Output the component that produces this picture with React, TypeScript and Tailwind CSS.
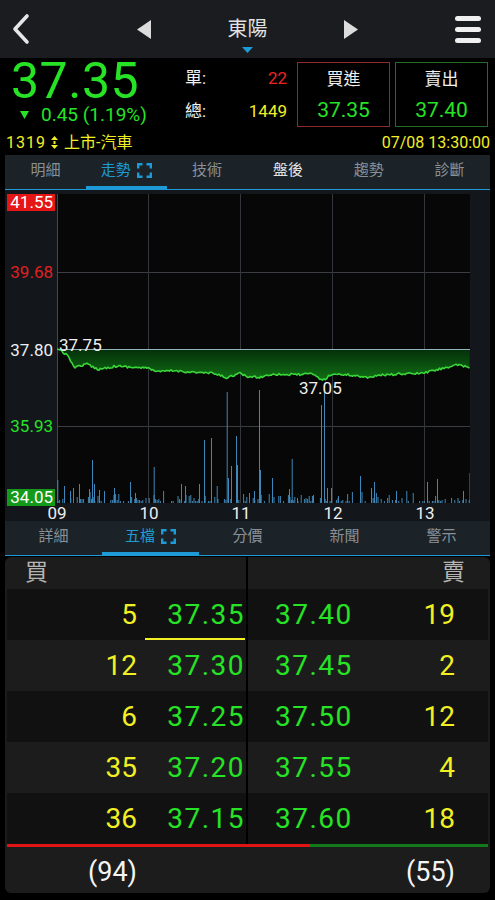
import React from "react";

const PW = 413;
const PH = 309;
const REF = 155;

const anchors: [number, number][] = [
  [57, 349], [60, 350], [66.7, 355], [75, 367.3], [86.7, 364], [98, 369.3], [116.7, 366], [133, 367.3],
  [150, 368.3], [156.7, 372], [173, 370.7], [200, 372.7], [213, 373.3], [226.7, 377.7], [240, 373.3],
  [246.7, 376.7], [260, 377.3], [273, 374], [290, 374.7], [313, 374], [322.7, 380.7], [331.7, 374],
  [350, 375], [366.7, 377.3], [383, 375], [400, 374], [423, 373.3], [433, 370.7], [446.7, 367.3],
  [456.7, 365], [470, 367.7],
].map(([x, y]) => [x - 57, y - 194] as [number, number]);

function rng(seed: number) {
  let s = seed;
  return () => {
    s = (s * 16807) % 2147483647;
    return (s - 1) / 2147483646;
  };
}

function interp(x: number) {
  for (let i = 0; i < anchors.length - 1; i++) {
    const [x0, y0] = anchors[i];
    const [x1, y1] = anchors[i + 1];
    if (x >= x0 && x <= x1) {
      const t = (x - x0) / (x1 - x0 || 1);
      return y0 + (y1 - y0) * t;
    }
  }
  return anchors[anchors.length - 1][1];
}

const r1 = rng(12345);
const linePts: [number, number][] = [];
for (let x = 0; x <= PW; x += 1.5) {
  let y = interp(x);
  if (x > 4) y += (r1() - 0.5) * 2.2;
  linePts.push([x, y]);
}
const linePath = linePts.map((p, i) => `${i === 0 ? "M" : "L"}${p[0].toFixed(1)} ${p[1].toFixed(1)}`).join(" ");
const fillPath = `M0 ${REF} ` + linePts.map((p) => `L${p[0].toFixed(1)} ${p[1].toFixed(1)}`).join(" ") + ` L${PW} ${REF} Z`;

const spikes: [number, number][] = [
  [57.3, 23], [64, 17], [70, 12], [73, 15], [79, 19], [89, 14], [92, 43], [94, 19], [99, 13], [104, 12],
  [114, 15], [130, 21], [135, 10], [153.7, 36], [181, 19], [185, 17], [199, 19], [204, 63], [211, 65],
  [216.7, 17], [226.7, 111], [228, 25], [231, 37], [236, 67], [237, 38], [249, 10], [254, 12], [259, 113],
  [260, 33], [272, 25], [289, 14], [291.7, 44], [297, 5], [313, 8], [321, 98], [324, 112], [327, 15],
  [331, 15], [338, 7], [360, 27], [371, 15], [374, 21], [396, 12], [427, 21], [437, 24], [463, 12], [469.5, 30],
];
const r2 = rng(777);
const bars: [number, number][] = [];
for (let x = 0.5; x < PW; x += 1.6) {
  if (r2() < 0.55) {
    const h = 2 + Math.floor(r2() * r2() * 12);
    bars.push([x, h]);
  }
}
spikes.forEach(([x, h]) => bars.push([x - 57, h]));

function Chevron() {
  return (
    <svg width="20" height="32" viewBox="0 0 20 32">
      <path d="M16 3 L4 16 L16 29" fill="none" stroke="#e6e6e6" strokeWidth="3.6" strokeLinecap="round" strokeLinejoin="round" />
    </svg>
  );
}

function Brackets() {
  return (
    <svg width="15" height="15" viewBox="0 0 15 15" className="ml-[6px]">
      <path d="M1.2 5.5 V1.2 H5.5 M9.5 1.2 H13.8 V5.5 M13.8 9.5 V13.8 H9.5 M5.5 13.8 H1.2 V9.5" fill="none" stroke="#1e9ad6" strokeWidth="2.4" />
    </svg>
  );
}

function Tabs({ items, active, bright }: { items: string[]; active: number; bright?: number }) {
  return (
    <div className="flex border-b border-[#1e9ad6] bg-[#1b2329]">
      {items.map((t, i) => (
        <div key={t} className="flex flex-1 flex-col">
          <div
            className={
              "flex h-[31px] items-center justify-center text-[15px] " +
              (i === active ? "text-[#1e9ad6]" : i === bright ? "text-[#e4e4e4]" : "text-[#8a9096]")
            }
          >
            <span>{t}</span>
            {i === active && <Brackets />}
          </div>
          <div className={"h-[3px] " + (i === active ? "bg-[#1e9ad6]" : "")} />
        </div>
      ))}
    </div>
  );
}

const book = [
  { bq: "5", bp: "37.35", ap: "37.40", aq: "19" },
  { bq: "12", bp: "37.30", ap: "37.45", aq: "2" },
  { bq: "6", bp: "37.25", ap: "37.50", aq: "12" },
  { bq: "35", bp: "37.20", ap: "37.55", aq: "4" },
  { bq: "36", bp: "37.15", ap: "37.60", aq: "18" },
];

export default function App() {
  return (
    <div className="h-[900px] w-[495px] overflow-hidden bg-black font-[Roboto,'Noto_Sans_CJK_TC',sans-serif] text-white">
      {/* header */}
      <div className="flex h-[58px] items-center bg-[#1a1c1f]">
        <div className="flex w-[137px] pl-[11px]">
          <Chevron />
        </div>
        <svg width="14" height="19" viewBox="0 0 14 19">
          <path d="M14 0 L0 9.5 L14 19 Z" fill="#dcdcdc" />
        </svg>
        <div className="flex h-full w-[193px] flex-col items-center pt-[16px]">
          <div className="text-[20px] leading-[26px] text-[#e2e2e2]">東陽</div>
          <svg width="11" height="6" viewBox="0 0 11 6" className="mt-[5px]">
            <path d="M0 0 L11 0 L5.5 6 Z" fill="#1e9ad6" />
          </svg>
        </div>
        <svg width="14" height="19" viewBox="0 0 14 19">
          <path d="M0 0 L14 9.5 L0 19 Z" fill="#dcdcdc" />
        </svg>
        <div className="flex flex-1 justify-end pr-[14px]">
          <div className="flex w-[26px] flex-col gap-[6px]">
            <div className="h-[5px] rounded-full bg-[#f0f0f0]" />
            <div className="h-[5px] rounded-full bg-[#f0f0f0]" />
            <div className="h-[5px] rounded-full bg-[#f0f0f0]" />
          </div>
        </div>
      </div>

      {/* quote */}
      <div className="flex h-[97px] flex-col">
        <div className="flex h-[72px]">
          <div className="flex w-[180px] flex-col pl-[11px]">
            <div className="flex h-[46px] items-center text-[50px] leading-[46px] tracking-[0.5px] text-[#26e326]">37.35</div>
            <div className="flex h-[22px] items-center text-[19px] leading-[22px] text-[#26e326]">
              <svg width="9" height="8" viewBox="0 0 9 8" className="ml-[9px] mr-[12px]">
                <path d="M0 0 L9 0 L4.5 8 Z" fill="#26e326" />
              </svg>
              <span>0.45 (1.19%)</span>
            </div>
          </div>
          <div className="flex w-[107px] flex-col pl-[5px] pt-[4px] text-[17px]">
            <div className="flex h-[33px] items-center justify-between">
              <span className="text-[#f0f0f0]">單:</span>
              <span className="text-[#ee2424]">22</span>
            </div>
            <div className="flex h-[33px] items-center justify-between">
              <span className="text-[#f0f0f0]">總:</span>
              <span className="text-[#f2ef24]">1449</span>
            </div>
          </div>
          <div className="ml-[10px] mt-[4px] flex h-[65px] gap-[5px]">
            <div className="flex w-[93px] flex-col items-center border border-[#8e2b2b]">
              <div className="flex h-[33px] items-center text-[17px] text-[#f0f0f0]">買進</div>
              <div className="flex h-[30px] items-center text-[21px] text-[#26e326]">37.35</div>
            </div>
            <div className="flex w-[93px] flex-col items-center border border-[#256b25]">
              <div className="flex h-[33px] items-center text-[17px] text-[#f0f0f0]">賣出</div>
              <div className="flex h-[30px] items-center text-[21px] text-[#26e326]">37.40</div>
            </div>
          </div>
        </div>
        <div className="flex h-[25px] items-center justify-between pl-[6px] pr-[5px] text-[16px] text-[#f2ef24]">
          <div className="flex items-center">
            <span className="tracking-[1px]">1319</span>
            <svg width="7" height="13" viewBox="0 0 7 13" className="ml-[5px] mr-[6px]">
              <path d="M0 4 L3.5 0 L7 4 Z M2.5 5 H4.5 V8 H2.5 Z M0 9 L7 9 L3.5 13 Z" fill="#f2ef24" />
            </svg>
            <span>上市-汽車</span>
          </div>
          <span>07/08 13:30:00</span>
        </div>
      </div>

      <div className="px-[5px]">
        <Tabs items={["明細", "走勢", "技術", "盤後", "趨勢", "診斷"]} active={1} bright={3} />

        {/* chart */}
        <div className="flex h-[331px] flex-col bg-[#13171b]">
          <div className="flex h-[316px] pt-[4px]">
            <div className="flex w-[52px] flex-col text-[17px] leading-[17px]">
              <div className="ml-[2px] w-[48px] bg-[#e51616] pr-[2px] text-right text-white">41.55</div>
              <div className="ml-[2px] mt-[53px] w-[48px] pr-[2px] text-right text-[#e02020]">39.68</div>
              <div className="ml-[2px] mt-[61px] w-[48px] pr-[2px] text-right text-[#eeeeee]">37.80</div>
              <div className="ml-[2px] mt-[59px] w-[48px] pr-[2px] text-right text-[#26e326]">35.93</div>
              <div className="ml-[2px] mt-[54px] w-[48px] bg-[#139a19] pr-[2px] text-right text-white">34.05</div>
            </div>
            <svg width={PW} height={PH} viewBox={`0 0 ${PW} ${PH}`} className="block bg-[#070707]">
              <defs>
                <linearGradient id="fg" x1="0" y1="0" x2="0" y2="1">
                  <stop offset="0" stopColor="#042f0a" />
                  <stop offset="1" stopColor="#107014" />
                </linearGradient>
              </defs>
              {[78, 232].map((y) => (
                <line key={y} x1="0" x2={PW} y1={y + 0.5} y2={y + 0.5} stroke="#3a3e42" strokeWidth="1" />
              ))}
              {[91.5, 183.5, 275.5, 367.5].map((x) => (
                <line key={x} x1={x} x2={x} y1="0" y2={PH} stroke="#33373b" strokeWidth="1" />
              ))}
              <line x1="0.5" x2="0.5" y1="0" y2={PH} stroke="#44484c" strokeWidth="1" />
              <path d={fillPath} fill="url(#fg)" />
              <line x1="0" x2={PW} y1={REF + 0.5} y2={REF + 0.5} stroke="#8fb4bb" strokeWidth="1" />
              {bars.map(([x, h], i) => (
                <rect key={i} x={x} y={PH - h} width="1" height={h} fill="#3f87b8" />
              ))}
              <path d={linePath} fill="none" stroke="#3ad63a" strokeWidth="1.6" strokeLinejoin="round" />
              <text x="2" y="157" fontSize="17" fill="#f0f0f0" fontFamily="Roboto, sans-serif">37.75</text>
              <text x="242" y="200" fontSize="17" fill="#f0f0f0" fontFamily="Roboto, sans-serif">37.05</text>
            </svg>
            <div className="w-[20px]" />
          </div>
          <div className="flex h-[15px] pl-[6px] text-[17px] leading-[15px] text-[#eeeeee]">
            {["09", "10", "11", "12", "13"].map((t) => (
              <div key={t} className="w-[92px] text-center">{t}</div>
            ))}
          </div>
        </div>

        <Tabs items={["詳細", "五檔", "分價", "新聞", "警示"]} active={1} />

        {/* order book */}
        <div className="mt-[1px] flex h-[336px] flex-col overflow-hidden rounded-[6px] bg-[#1c1c1c] px-[2px]">
          <div className="flex h-[32px] text-[23px] text-[#b4b4b4]">
            <div className="flex w-[239px] items-center pl-[18px]">買</div>
            <div className="w-[2px] bg-black" />
            <div className="flex flex-1 items-center justify-end pr-[23px]">賣</div>
          </div>
          {book.map((r, i) => (
            <div key={i} className={"flex h-[51px] text-[28px] " + (i % 2 === 0 ? "bg-[#111111]" : "bg-[#1c1c1c]")}>
              <div className="flex w-[239px] items-center">
                <div className="w-[130px] text-right text-[#f2ef24]">{r.bq}</div>
                <div className="relative flex h-full w-[108px] items-center justify-end tracking-[1.5px] text-[#26e326]">
                  {r.bp}
                  {i === 0 && <div className="absolute bottom-0 right-0 h-[2px] w-[100px] bg-[#f2ef24]" />}
                </div>
              </div>
              <div className="w-[2px] bg-black" />
              <div className="flex flex-1 items-center justify-between pl-[27px] pr-[33px]">
                <span className="tracking-[1.5px] text-[#26e326]">{r.ap}</span>
                <span className="text-[#f2ef24]">{r.aq}</span>
              </div>
            </div>
          ))}
          <div className="flex h-[3px]">
            <div className="w-[303px] bg-[#e01414]" />
            <div className="flex-1 bg-[#137a1b]" />
          </div>
          <div className="flex flex-1 items-center pt-[4px] text-[27px] text-[#f4f4f4]">
            <div className="w-[130px] text-right">(94)</div>
            <div className="ml-auto pr-[33px]">(55)</div>
          </div>
        </div>
      </div>
    </div>
  );
}
